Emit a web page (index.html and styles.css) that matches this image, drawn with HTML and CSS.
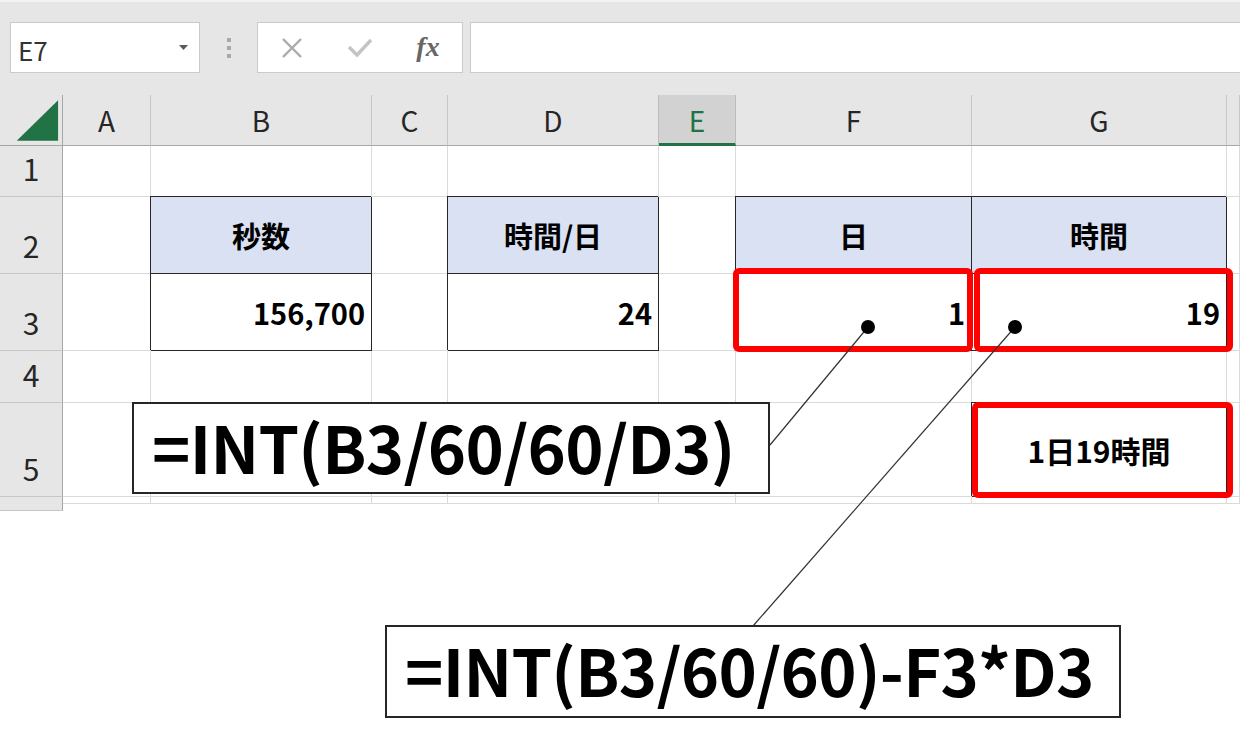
FILE: index.html
```html
<!DOCTYPE html>
<html lang="ja">
<head>
    <meta charset="UTF-8">
    <title>秒数を日と時間に変換</title>
    <link rel="stylesheet" href="styles.css">
</head>
<body>
<div class="page">
    <div class="formula-bar">
        <div class="name-box">
            <span>E7</span>
            <svg class="dropdown" width="9" height="5" viewBox="0 0 9 5"><path d="M0 0H9L4.5 5Z" fill="#595959"/></svg>
        </div>
        <div class="grip"><i></i><i></i><i></i></div>
        <div class="fx-buttons">
            <svg width="22" height="22" viewBox="0 0 22 22"><path d="M2 2L20 20M20 2L2 20" stroke="#ababab" stroke-width="2.4" fill="none"/></svg>
            <svg width="26" height="22" viewBox="0 0 26 22"><path d="M2 10L10 18L24 3" stroke="#c4c4c4" stroke-width="3.4" fill="none"/></svg>
            <span class="fx">fx</span>
        </div>
        <div class="formula-input"></div>
    </div>

    <div class="sheet">
        <!-- column headers -->
        <div class="c corner"><svg width="63" height="51" viewBox="0 0 63 51"><path d="M17 46H59V5Z" fill="#217346"/></svg></div>
        <div class="c ch">A</div>
        <div class="c ch">B</div>
        <div class="c ch">C</div>
        <div class="c ch">D</div>
        <div class="c ch active">E</div>
        <div class="c ch">F</div>
        <div class="c ch">G</div>
        <div class="c ch"></div>

        <!-- row 1 -->
        <div class="c rh">1</div>
        <div class="c"></div><div class="c"></div><div class="c"></div><div class="c"></div>
        <div class="c"></div><div class="c"></div><div class="c"></div><div class="c"></div>

        <!-- row 2 -->
        <div class="c rh">2</div>
        <div class="c"></div>
        <div class="c box hd">秒数</div>
        <div class="c"></div>
        <div class="c box hd">時間/日</div>
        <div class="c"></div>
        <div class="c box hd">日</div>
        <div class="c box hd">時間</div>
        <div class="c"></div>

        <!-- row 3 -->
        <div class="c rh">3</div>
        <div class="c"></div>
        <div class="c box num">156,700</div>
        <div class="c"></div>
        <div class="c box num">24</div>
        <div class="c"></div>
        <div class="c box num">1</div>
        <div class="c box num">19</div>
        <div class="c"></div>

        <!-- row 4 -->
        <div class="c rh">4</div>
        <div class="c"></div><div class="c"></div><div class="c"></div><div class="c"></div>
        <div class="c"></div><div class="c"></div><div class="c"></div><div class="c"></div>

        <!-- row 5 -->
        <div class="c rh">5</div>
        <div class="c"></div><div class="c"></div><div class="c"></div><div class="c"></div>
        <div class="c"></div><div class="c"></div>
        <div class="c box result">1日19時間</div>
        <div class="c"></div>

        <!-- row 6, cut off -->
        <div class="c rh"></div>
        <div class="c"></div><div class="c"></div><div class="c"></div><div class="c"></div>
        <div class="c"></div><div class="c"></div><div class="c"></div><div class="c"></div>
    </div>

    <!-- red highlight frames -->
    <div class="mark mark-f3"></div>
    <div class="mark mark-g3"></div>
    <div class="mark mark-g5"></div>

    <svg class="leaders" width="1240" height="744" viewBox="0 0 1240 744">
        <line x1="770" y1="445" x2="868" y2="327" stroke="#333" stroke-width="1.2"/>
        <line x1="753" y1="626" x2="1015" y2="327" stroke="#333" stroke-width="1.2"/>
        <circle cx="868" cy="327" r="7" fill="#000"/>
        <circle cx="1015" cy="327" r="7" fill="#000"/>
    </svg>

    <div class="callout callout-1">=INT(B3/60/60/D3)</div>
    <div class="callout callout-2">=INT(B3/60/60)-F3*D3</div>
</div>
</body>
</html>
```

FILE: styles.css
```css
body {
    margin: 0;
    background: #fff;
    font-family: "Noto Sans CJK JP", "Noto Sans", sans-serif;
    color: #000;
}

.page {
    position: relative;
    width: 1240px;
    height: 744px;
    overflow: hidden;
}

/* formula bar */
.formula-bar {
    display: flex;
    align-items: flex-start;
    height: 95px;
    box-sizing: border-box;
    padding: 20px 0 0 10px;
    background: #e6e6e6;
    border-top: 2px solid #f2f2f2;
}

.name-box, .fx-buttons, .formula-input {
    height: 51px;
    box-sizing: border-box;
    background: #fff;
    border: 1px solid #cacaca;
}

.name-box {
    width: 190px;
    display: flex;
    align-items: center;
    justify-content: space-between;
    padding: 0 11px 0 7px;
    font-size: 26px;
    color: #333;
}

.name-box span {
    margin-top: 4px;
}

.grip {
    width: 57px;
    height: 51px;
    display: flex;
    flex-direction: column;
    align-items: center;
    justify-content: center;
    gap: 4px;
}

.grip i {
    width: 4px;
    height: 4px;
    background: #a9a9a9;
}

.fx-buttons {
    width: 206px;
    display: grid;
    grid-template-columns: repeat(3, 1fr);
    align-items: center;
    justify-items: center;
}

.fx {
    font-family: "Liberation Serif", serif;
    font-style: italic;
    font-weight: 700;
    font-size: 28px;
    color: #676767;
    margin-top: -2px;
}

.formula-input {
    flex: 1;
    margin-left: 7px;
    border-right: none;
}

/* grid */
.sheet {
    display: grid;
    grid-template-columns: 63px 88px 221px 76px 211px 77px 236px 255px 13px;
    grid-template-rows: 51px 51px 77px 77px 52px 94px 7px;
}

.c {
    display: flex;
    align-items: center;
    box-sizing: border-box;
    border-right: 1px solid #dadada;
    border-bottom: 1px solid #dadada;
    background: #fff;
}

.ch, .rh, .corner {
    background: #e6e6e6;
    color: #262626;
    font-size: 28px;
}

.ch {
    justify-content: center;
    border-right-color: #c6c6c6;
    border-bottom-color: #a6a6a6;
}

.ch.active {
    background: #d2d2d2;
    color: #217346;
    border-bottom: 3px solid #217346;
    border-right-color: #bcbcbc;
    box-shadow: -1px 0 0 #bcbcbc;
    padding-top: 2px;
}

.corner {
    border-right-color: #a6a6a6;
    border-bottom-color: #a6a6a6;
}

.rh {
    justify-content: center;
    align-items: flex-end;
    padding-bottom: 13px;
    line-height: 1;
    font-size: 30px;
    border-right-color: #a6a6a6;
    border-bottom-color: #c6c6c6;
}

.box {
    border-right-color: #262626;
    border-bottom-color: #262626;
    box-shadow: -1px -1px 0 #262626;
}

.hd, .num, .result {
    font-weight: 700;
    font-size: 29px;
}

.hd {
    justify-content: center;
    background: #d9e1f2;
}

.num {
    justify-content: flex-end;
    padding-right: 6px;
}

.result {
    justify-content: center;
    font-size: 30px;
}

/* red frames over cells */
.mark {
    position: absolute;
    box-sizing: border-box;
    border: 6px solid #ff0000;
    border-radius: 6px;
}

.mark-f3 { left: 733px; top: 268px; width: 240px; height: 84px; }
.mark-g3 { left: 974px; top: 268px; width: 259px; height: 84px; }
.mark-g5 { left: 972px; top: 402px; width: 261px; height: 96px; }

/* callouts */
.leaders {
    position: absolute;
    left: 0;
    top: 0;
}

.callout {
    position: absolute;
    display: flex;
    align-items: center;
    box-sizing: border-box;
    padding: 0 0 4px 18px;
    background: #fff;
    border: 2px solid #262626;
    font-size: 65px;
    font-weight: 700;
    line-height: 1;
    letter-spacing: -0.7px;
    white-space: nowrap;
}

.callout-1 { left: 132px; top: 402px; width: 638px; height: 92px; }
.callout-2 { left: 385px; top: 625px; width: 736px; height: 93px; }
```
